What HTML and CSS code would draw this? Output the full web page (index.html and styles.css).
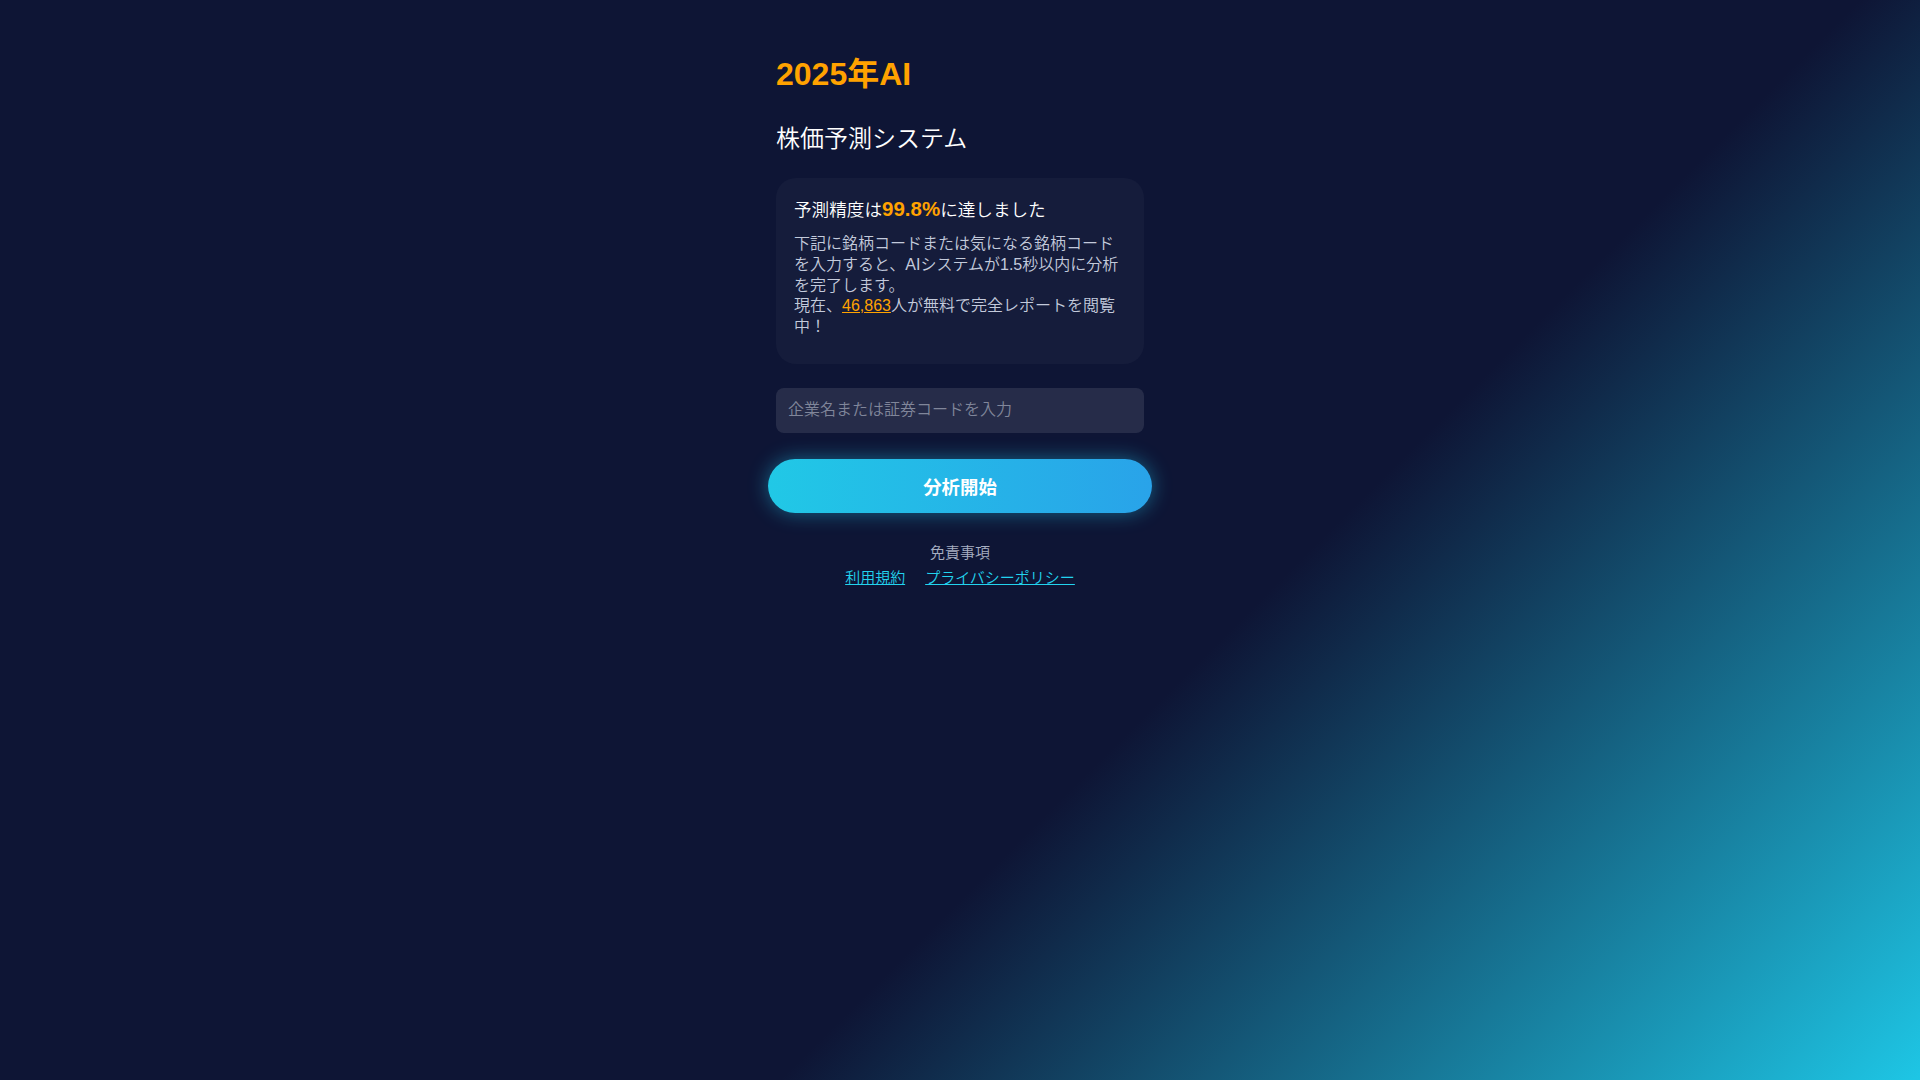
FILE: index.html
```html
<!DOCTYPE html>
<html lang="ja">
<head>
<meta charset="utf-8">
<title>2025年AI 株価予測システム</title>
<link rel="stylesheet" href="styles.css">
</head>
<body>
<main class="container">
  <h1 class="title">2025年AI</h1>
  <h2 class="subtitle">株価予測システム</h2>
  <section class="card">
    <p class="card-heading">予測精度は<span class="accent">99.8%</span>に達しました</p>
    <p class="card-body">下記に銘柄コードまたは気になる銘柄コードを入力すると、AIシステムが1.5秒以内に分析を完了します。<br>現在、<a class="count" href="#">46,863</a>人が無料で完全レポートを閲覧中！</p>
  </section>
  <input class="search" type="text" placeholder="企業名または証券コードを入力">
  <button class="start" type="button">分析開始</button>
  <footer class="footer">
    <div class="disclaimer">免責事項</div>
    <div class="links"><a href="#">利用規約</a><a href="#">プライバシーポリシー</a></div>
  </footer>
</main>
</body>
</html>
```

FILE: styles.css
```css
html, body {
  margin: 0;
  padding: 0;
}
body {
  min-height: 100vh;
  background: linear-gradient(135deg, #0e1535 0%, #0e1535 62%, #1ec6e5 100%);
  font-family: "Liberation Sans", "Noto Sans CJK JP", sans-serif;
  font-weight: 350;
  color: #ffffff;
}
.container {
  width: 368px;
  margin: 0 auto;
  padding-top: 54px;
  display: flex;
  flex-direction: column;
}
.title {
  margin: 0;
  font-size: 32px;
  line-height: 40px;
  font-weight: bold;
  color: #ffa200;
}
.subtitle {
  margin: 29px 0 0;
  font-size: 24px;
  line-height: 32px;
  font-weight: 350;
  color: #ffffff;
}
.card {
  margin-top: 23px;
  background: rgba(255, 255, 255, 0.03);
  border-radius: 20px;
  padding: 18px 18px 26px;
}
.card-heading {
  margin: 0;
  font-size: 17.6px;
  line-height: 25px;
  font-weight: 350;
  color: #ffffff;
}
.accent {
  font-size: 20.5px;
  font-weight: bold;
  color: #ffa200;
}
.card-body {
  margin: 11px 0 0;
  font-size: 16px;
  line-height: 20.8px;
  color: #c3cadb;
}
.count {
  color: #ffa200;
  text-decoration: underline;
}
.search {
  margin-top: 24px;
  height: 45px;
  box-sizing: border-box;
  border: none;
  outline: none;
  border-radius: 8px;
  background: rgba(255, 255, 255, 0.1);
  padding: 0 12px;
  font-family: "Liberation Sans", "Noto Sans CJK JP", sans-serif;
  font-weight: 350;
  font-size: 16px;
  color: #ffffff;
}
.search::placeholder {
  color: #80869a;
}
.start {
  margin: 26px -8px 0;
  height: 54px;
  border: none;
  border-radius: 27px;
  background: linear-gradient(90deg, #21c8e6, #29a3e9);
  box-shadow: 0 0 20px rgba(34, 200, 238, 0.45);
  font-family: "Liberation Sans", "Noto Sans CJK JP", sans-serif;
  font-size: 18.4px;
  font-weight: bold;
  color: #ffffff;
  cursor: pointer;
}
.footer {
  margin-top: 30px;
  text-align: center;
  font-size: 15px;
}
.disclaimer {
  line-height: 20px;
  color: #a7afc2;
}
.links {
  margin-top: 5px;
  line-height: 20px;
  display: flex;
  justify-content: center;
  gap: 20px;
}
.links a {
  color: #22d3ee;
  text-decoration: underline;
}
```
